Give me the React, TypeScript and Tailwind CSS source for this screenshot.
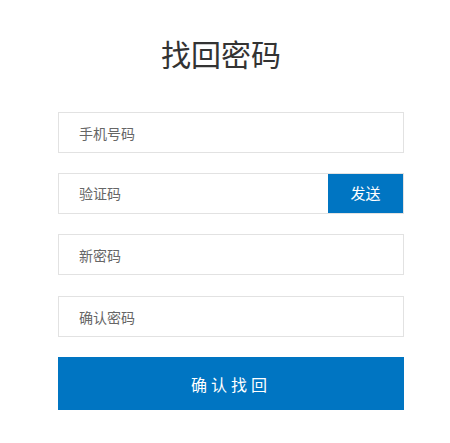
export default function App() {
  return (
    <div className="w-[450px] h-[443px] bg-white font-['Microsoft_YaHei','Noto_Sans_CJK_SC',sans-serif]">
      <div className="pt-[33px] pr-[8px] flex flex-col items-center">
        <h1 className="text-[30px] leading-[40px] text-[#333] font-normal">找回密码</h1>
      </div>
      <div className="ml-[58px] w-[346px] mt-[39px] flex flex-col">
        <input
          placeholder="手机号码"
          className="h-[41px] w-full border border-[#e2e2e2] px-[20px] text-[14px] text-[#333] placeholder:text-[#666] outline-none"
        />
        <div className="mt-[20px] flex h-[41px] border border-[#e2e2e2]">
          <input
            placeholder="验证码"
            className="flex-1 min-w-0 px-[20px] text-[14px] text-[#333] placeholder:text-[#666] outline-none"
          />
          <button className="w-[75px] bg-[#0075c2] text-white text-[15px]">发送</button>
        </div>
        <input
          placeholder="新密码"
          className="mt-[20px] h-[41px] w-full border border-[#e2e2e2] px-[20px] text-[14px] text-[#333] placeholder:text-[#666] outline-none"
        />
        <input
          placeholder="确认密码"
          className="mt-[21px] h-[41px] w-full border border-[#e2e2e2] px-[20px] text-[14px] text-[#333] placeholder:text-[#666] outline-none"
        />
        <button className="mt-[20px] h-[53px] w-full bg-[#0075c2] text-white text-[16px] tracking-[4px]">
          确认找回
        </button>
      </div>
    </div>
  )
}
